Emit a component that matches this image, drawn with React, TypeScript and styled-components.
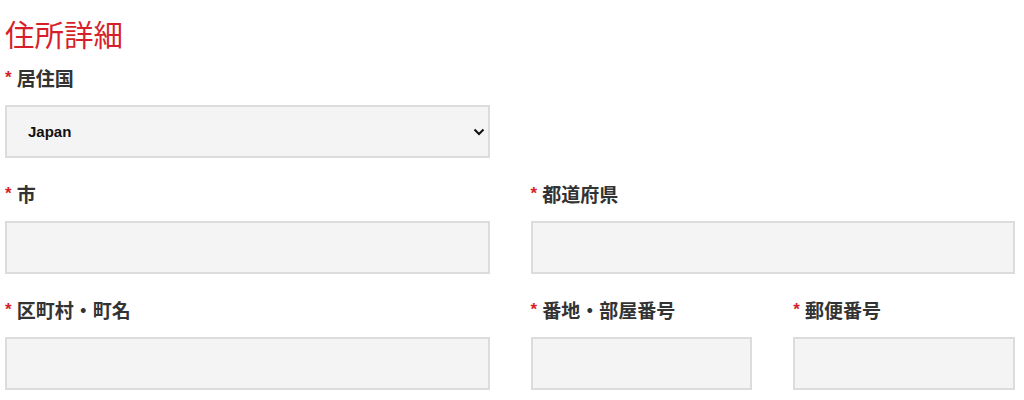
import React from "react";
import styled, { createGlobalStyle } from "styled-components";

const GlobalStyle = createGlobalStyle`
  html, body { margin: 0; padding: 0; background: #ffffff; }
  body { font-family: "Noto Sans CJK JP", "Noto Sans", sans-serif; }
  * { box-sizing: border-box; }
`;

const Page = styled.div`
  width: 1024px;
  padding: 15px 9px 0 5px;
`;

const Title = styled.h2`
  margin: 0 0 14px 0;
  font-family: "Noto Sans CJK JP", sans-serif;
  font-weight: 400;
  font-size: 29.5px;
  line-height: 36px;
  color: #d71f2b;
`;

const Grid = styled.div`
  display: grid;
  grid-template-columns: 1fr 1fr;
  column-gap: 41px;
`;

const SubGrid = styled.div`
  display: grid;
  grid-template-columns: 1fr 1fr;
  column-gap: 41px;
`;

const Field = styled.div`
  display: flex;
  flex-direction: column;
  margin-bottom: 23px;
`;

const Label = styled.label`
  display: flex;
  align-items: center;
  gap: 5px;
  height: 24px;
  margin-bottom: 16px;
  font-family: "Noto Sans CJK JP", sans-serif;
  font-weight: 700;
  font-size: 19px;
  color: #333333;
  white-space: nowrap;
`;

const Star = styled.span`
  color: #d71f2b;
  font-family: "Liberation Sans", sans-serif;
  font-size: 17px;
  font-weight: 700;
  position: relative;
  top: 1px;
`;

const Input = styled.input`
  display: block;
  width: 100%;
  height: 53px;
  margin: 0;
  background: #f4f4f4;
  border: 2px solid #dcdcdc;
  outline: none;
  font-size: 15px;
`;

const SelectWrap = styled.div`
  position: relative;
  width: 100%;
  height: 53px;
`;

const Select = styled.select`
  appearance: none;
  -webkit-appearance: none;
  display: block;
  width: 100%;
  height: 53px;
  margin: 0;
  padding: 0 0 0 21px;
  background: #f4f4f4;
  border: 2px solid #dcdcdc;
  border-radius: 0;
  outline: none;
  font-family: "Liberation Sans", Arial, sans-serif;
  font-weight: 700;
  font-size: 15px;
  color: #111111;
`;

const Chevron = styled.svg`
  position: absolute;
  right: 5px;
  top: 23px;
  pointer-events: none;
`;

const LabelText: React.FC<{ text: string }> = ({ text }) => (
  <Label>
    <Star>*</Star>
    <span>{text}</span>
  </Label>
);

export default function App() {
  return (
    <>
      <GlobalStyle />
      <Page>
        <Title>住所詳細</Title>
        <Grid>
          <Field>
            <LabelText text="居住国" />
            <SelectWrap>
              <Select defaultValue="Japan">
                <option value="Japan">Japan</option>
              </Select>
              <Chevron width="12" height="8" viewBox="0 0 12 8">
                <path d="M1.5 1.5 L6 6 L10.5 1.5" fill="none" stroke="#111" strokeWidth="2" />
              </Chevron>
            </SelectWrap>
          </Field>
          <div />
          <Field>
            <LabelText text="市" />
            <Input />
          </Field>
          <Field>
            <LabelText text="都道府県" />
            <Input />
          </Field>
          <Field>
            <LabelText text="区町村・町名" />
            <Input />
          </Field>
          <SubGrid>
            <Field>
              <LabelText text="番地・部屋番号" />
              <Input />
            </Field>
            <Field>
              <LabelText text="郵便番号" />
              <Input />
            </Field>
          </SubGrid>
        </Grid>
      </Page>
    </>
  );
}
